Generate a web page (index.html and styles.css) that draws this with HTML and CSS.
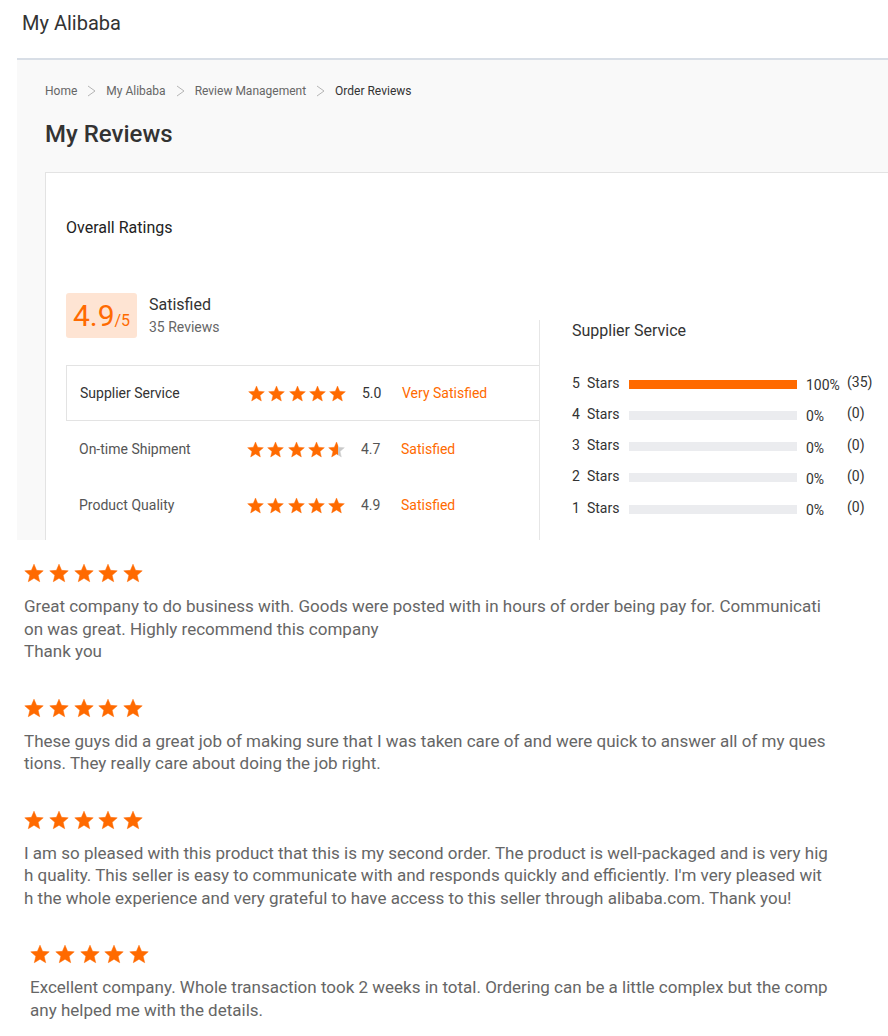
FILE: index.html
```html
<!DOCTYPE html>
<html lang="en">
<head>
    <meta charset="UTF-8">
    <meta name="viewport" content="width=device-width, initial-scale=1.0">
    <title>My Reviews - My Alibaba</title>
    <link rel="stylesheet" href="styles.css">
</head>
<body>
    <header class="topbar">My Alibaba</header>

    <section class="panel">
        <nav class="breadcrumb">
            <span>Home</span>
            <svg class="crumb-sep" viewBox="0 0 9 12"><polyline points="1,1 8,6 1,11"/></svg>
            <span>My Alibaba</span>
            <svg class="crumb-sep" viewBox="0 0 9 12"><polyline points="1,1 8,6 1,11"/></svg>
            <span>Review Management</span>
            <svg class="crumb-sep" viewBox="0 0 9 12"><polyline points="1,1 8,6 1,11"/></svg>
            <span class="current">Order Reviews</span>
        </nav>
        <h1 class="page-title">My Reviews</h1>

        <div class="card">
            <h2 class="card-title">Overall Ratings</h2>

            <div class="overall">
                <div class="overall-left">
                    <div class="summary">
                        <div class="score"><span class="score-num">4.9</span><span class="score-max">/5</span></div>
                        <div class="summary-text">
                            <div class="summary-label">Satisfied</div>
                            <div class="summary-count">35 Reviews</div>
                        </div>
                    </div>

                    <div class="rating-rows">
                        <div class="rating-row active">
                            <span class="rating-name">Supplier Service</span>
                            <span class="stars stars-sm">
                                <svg><use href="#star"/></svg><svg><use href="#star"/></svg><svg><use href="#star"/></svg><svg><use href="#star"/></svg><svg><use href="#star"/></svg>
                            </span>
                            <span class="rating-value">5.0</span>
                            <span class="rating-status">Very Satisfied</span>
                        </div>
                        <div class="rating-row">
                            <span class="rating-name">On-time Shipment</span>
                            <span class="stars stars-sm">
                                <svg><use href="#star"/></svg><svg><use href="#star"/></svg><svg><use href="#star"/></svg><svg><use href="#star"/></svg><svg class="part"><use href="#star"/></svg>
                            </span>
                            <span class="rating-value">4.7</span>
                            <span class="rating-status">Satisfied</span>
                        </div>
                        <div class="rating-row">
                            <span class="rating-name">Product Quality</span>
                            <span class="stars stars-sm">
                                <svg><use href="#star"/></svg><svg><use href="#star"/></svg><svg><use href="#star"/></svg><svg><use href="#star"/></svg><svg><use href="#star"/></svg>
                            </span>
                            <span class="rating-value">4.9</span>
                            <span class="rating-status">Satisfied</span>
                        </div>
                    </div>
                </div>

                <div class="overall-right">
                    <h3 class="dist-title">Supplier Service</h3>
                    <div class="dist-row">
                        <span class="dist-label"><b>5</b>Stars</span>
                        <span class="bar"><span class="bar-fill" style="width: 100%"></span></span>
                        <span class="dist-pct">100%</span>
                        <span class="dist-count">(35)</span>
                    </div>
                    <div class="dist-row">
                        <span class="dist-label"><b>4</b>Stars</span>
                        <span class="bar"><span class="bar-fill" style="width: 0%"></span></span>
                        <span class="dist-pct">0%</span>
                        <span class="dist-count">(0)</span>
                    </div>
                    <div class="dist-row">
                        <span class="dist-label"><b>3</b>Stars</span>
                        <span class="bar"><span class="bar-fill" style="width: 0%"></span></span>
                        <span class="dist-pct">0%</span>
                        <span class="dist-count">(0)</span>
                    </div>
                    <div class="dist-row">
                        <span class="dist-label"><b>2</b>Stars</span>
                        <span class="bar"><span class="bar-fill" style="width: 0%"></span></span>
                        <span class="dist-pct">0%</span>
                        <span class="dist-count">(0)</span>
                    </div>
                    <div class="dist-row">
                        <span class="dist-label"><b>1</b>Stars</span>
                        <span class="bar"><span class="bar-fill" style="width: 0%"></span></span>
                        <span class="dist-pct">0%</span>
                        <span class="dist-count">(0)</span>
                    </div>
                </div>
            </div>
        </div>
    </section>

    <main class="reviews">
        <article class="review">
            <div class="stars stars-lg">
                <svg><use href="#star"/></svg><svg><use href="#star"/></svg><svg><use href="#star"/></svg><svg><use href="#star"/></svg><svg><use href="#star"/></svg>
            </div>
            <p class="review-text">Great company to do business with. Goods were posted with in hours of order being pay for. Communication was great. Highly recommend this company<br>Thank you</p>
        </article>
        <article class="review">
            <div class="stars stars-lg">
                <svg><use href="#star"/></svg><svg><use href="#star"/></svg><svg><use href="#star"/></svg><svg><use href="#star"/></svg><svg><use href="#star"/></svg>
            </div>
            <p class="review-text">These guys did a great job of making sure that I was taken care of and were quick to answer all of my questions. They really care about doing the job right.</p>
        </article>
        <article class="review">
            <div class="stars stars-lg">
                <svg><use href="#star"/></svg><svg><use href="#star"/></svg><svg><use href="#star"/></svg><svg><use href="#star"/></svg><svg><use href="#star"/></svg>
            </div>
            <p class="review-text">I am so pleased with this product that this is my second order. The product is well-packaged and is very high quality. This seller is easy to communicate with and responds quickly and efficiently. I'm very pleased with the whole experience and very grateful to have access to this seller through alibaba.com. Thank you!</p>
        </article>
        <article class="review shifted">
            <div class="stars stars-lg">
                <svg><use href="#star"/></svg><svg><use href="#star"/></svg><svg><use href="#star"/></svg><svg><use href="#star"/></svg><svg><use href="#star"/></svg>
            </div>
            <p class="review-text">Excellent company. Whole transaction took 2 weeks in total. Ordering can be a little complex but the company helped me with the details.</p>
        </article>
    </main>

    <!-- star shape + partial fill used above -->
    <svg class="sprite">
        <defs>
            <linearGradient id="part-fill" x1="0" x2="1" y1="0" y2="0">
                <stop offset="0.62" stop-color="#ff6a00"/>
                <stop offset="0.62" stop-color="#c9c9c9"/>
            </linearGradient>
            <symbol id="star" viewBox="-0.3 -0.1 20.6 19.4">
                <path d="M10 0.5L12.65 6.86L19.51 7.41L14.28 11.89L15.88 18.59L10 15L4.12 18.59L5.72 11.89L0.49 7.41L7.35 6.86Z"/>
            </symbol>
        </defs>
    </svg>
</body>
</html>
```

FILE: styles.css
```css
/* Base */
body {
    margin: 0;
    padding: 0;
    background: #fff;
    font-family: Roboto, "Liberation Sans", Arial, sans-serif;
    color: #333;
}

.topbar {
    height: 58px;
    padding-left: 22px;
    font-size: 20px;
    line-height: 46px;
    color: #333;
}

/* Gray panel with breadcrumb and card */
.panel {
    margin-left: 17px;
    height: 482px;
    border-top: 2px solid #d8dee6;
    background: #f9f9f9;
    padding: 23px 0 0 28px;
    overflow: hidden;
    box-sizing: border-box;
}

.breadcrumb {
    display: flex;
    align-items: center;
    gap: 10px;
    font-size: 12px;
    line-height: 16px;
    color: #666;
}

.breadcrumb .current {
    color: #333;
}

.crumb-sep {
    width: 9px;
    height: 12px;
    fill: none;
    stroke: #b5b5b5;
    stroke-width: 1;
}

.page-title {
    margin: 19px 0 0;
    font-size: 24px;
    line-height: 32px;
    font-weight: 500;
    color: #333;
}

.card {
    margin-top: 22px;
    width: 900px;
    height: 400px;
    background: #fff;
    border: 1px solid #e3e3e3;
    padding: 44px 0 0 20px;
    box-sizing: border-box;
}

.card-title {
    margin: 0;
    font-size: 16px;
    line-height: 22px;
    font-weight: 400;
    color: #222;
}

.overall {
    display: flex;
    align-items: flex-start;
    margin-top: 54px;
}

.overall-left {
    width: 473px;
}

.summary {
    display: flex;
    align-items: center;
}

.score {
    width: 71px;
    height: 45px;
    background: #fee4d3;
    border-radius: 3px;
    color: #ff6a00;
    display: flex;
    align-items: baseline;
    justify-content: center;
    line-height: 45px;
}

.score-num {
    font-size: 30px;
}

.score-max {
    font-size: 16px;
}

.summary-text {
    margin-left: 12px;
}

.summary-label {
    font-size: 16px;
    line-height: 22px;
    color: #333;
}

.summary-count {
    font-size: 14px;
    line-height: 22px;
    color: #666;
}

.rating-rows {
    margin-top: 27px;
}

.rating-row {
    display: flex;
    align-items: center;
    height: 56px;
    padding-left: 13px;
    font-size: 14px;
    color: #555;
    box-sizing: border-box;
}

.rating-row.active {
    border: 1px solid #e3e3e3;
    border-right: 0;
    color: #333;
}

.rating-name {
    width: 168px;
}

.rating-value {
    width: 40px;
    margin-left: 16px;
}

.rating-status {
    color: #ff6a00;
}

/* Stars */
.stars {
    display: flex;
    fill: #ff6a00;
    stroke: #ff6a00;
    stroke-width: 0.5;
    stroke-linejoin: round;
}

.stars-sm {
    gap: 3.25px;
}

.stars-sm svg {
    width: 17px;
    height: 17px;
}

.stars-lg {
    gap: 4.75px;
}

.stars-lg svg {
    width: 20px;
    height: 20px;
}

.stars svg.part {
    fill: url(#part-fill);
    stroke: url(#part-fill);
}

.sprite {
    display: block;
    width: 0;
    height: 0;
    overflow: hidden;
}

/* Distribution */
.overall-right {
    margin-top: 27px;
    height: 260px;
    border-left: 1px solid #e6e6e6;
    padding-left: 32px;
}

.dist-title {
    margin: 0 0 25px;
    font-size: 16px;
    line-height: 22px;
    font-weight: 400;
    color: #333;
}

.dist-row {
    display: flex;
    align-items: center;
    height: 31.25px;
    font-size: 14px;
    color: #333;
}

.dist-label {
    width: 57px;
}

.dist-label b {
    font-weight: 400;
    margin-right: 7px;
}

.bar {
    width: 168px;
    height: 9px;
    margin-top: 3px;
    background: #ebecef;
}

.bar-fill {
    display: block;
    height: 100%;
    background: #ff6a00;
}

.dist-pct {
    width: 41px;
    margin-left: 9px;
    padding-top: 5px;
}

.dist-count {
    padding-bottom: 1px;
}

/* Review list */
.reviews {
    padding: 23px 0 0 24px;
}

.review {
    margin-bottom: 35px;
}

.review.shifted {
    margin-left: 6px;
}

.review-text {
    width: 806px;
    margin: 12px 0 0;
    font-size: 17px;
    line-height: 22.5px;
    color: #666;
    word-break: break-all;
}
```
